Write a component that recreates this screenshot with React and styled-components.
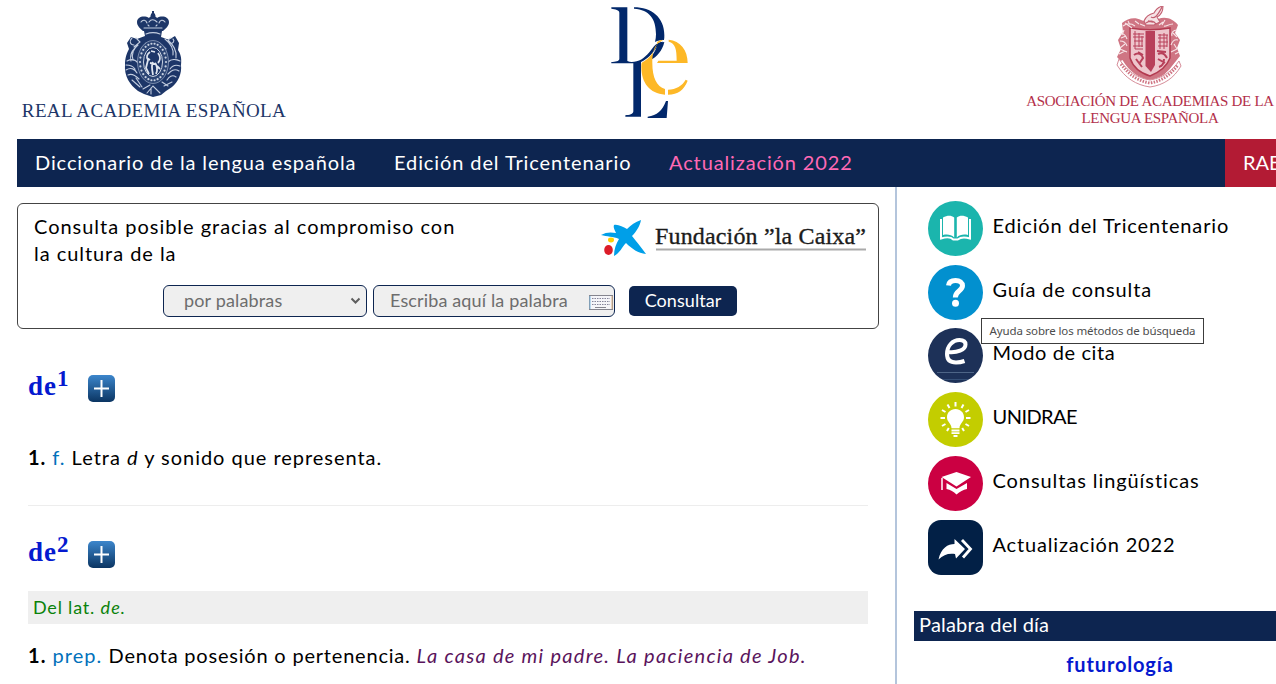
import React from "react";
import styled, { createGlobalStyle } from "styled-components";

const navy = "#0d2550";

const Global = createGlobalStyle`
  *{box-sizing:border-box}
  html,body{margin:0;padding:0;background:#fff;overflow:hidden}
  body{font-family:Lato,"Noto Sans",sans-serif;font-size:20px;color:#000;width:1276px;height:684px}
`;

const Page = styled.div`width:1276px;height:684px;overflow:hidden;background:#fff;display:flex;flex-direction:column;`;
const T = styled.span`
  letter-spacing:${p => p.$s ?? 1}px;
  white-space:pre;
  color:${p => p.$c || "inherit"};
  font-style:${p => (p.$i ? "italic" : "normal")};
  font-weight:${p => (p.$b ? 700 : 400)};
`;

const Header = styled.header`height:139px;flex:none;display:flex;justify-content:space-between;`;
const Brand = styled.div`
  width:${p => p.$w}px;
  margin-left:${p => p.$ml || 0}px;
  margin-right:${p => p.$mr || 0}px;
  padding-top:${p => p.$pt}px;
  display:flex;flex-direction:column;align-items:center;
  font-family:"Liberation Serif",serif;
  color:${p => p.$c};
  white-space:nowrap;
`;
const BrandLine = styled.div`
  font-size:${p => p.$fs}px;
  line-height:${p => p.$lh}px;
  letter-spacing:${p => p.$s}px;
  margin-top:${p => p.$mt || 0}px;
`;

const Nav = styled.nav`
  height:48px;flex:none;margin-left:17px;background:${navy};color:#fff;
  display:flex;line-height:46px;padding-left:18px;
`;
const NavItem = styled.a`width:${p => p.$w}px;flex:none;color:${p => p.$c || "#fff"};`;
const RaeTab = styled.a`margin-left:auto;width:51px;background:#b31b34;padding-left:18px;overflow:hidden;white-space:nowrap;`;

const Body = styled.div`flex:1;display:flex;min-height:0;`;
const Main = styled.main`width:895px;flex:none;padding:16px 16px 0 17px;`;
const SearchBox = styled.section`
  height:126px;border:1px solid #444;border-radius:6px;padding:9px 0 0 16px;
  display:flex;flex-direction:column;
`;
const Sponsor = styled.div`display:flex;justify-content:space-between;height:72px;padding-right:11px;`;
const SponsorText = styled.p`margin:0;line-height:27px;`;
const Form = styled.div`display:flex;height:32px;padding-left:129px;font-size:18px;color:#6d6d6d;align-items:center;`;
const Field = styled.div`
  width:${p => p.$w}px;height:32px;margin-right:${p => p.$mr}px;
  padding:0 ${p => p.$pr}px 3px ${p => p.$pl}px;
  border:1px solid ${navy};border-radius:6px;background:#efefef;
  display:flex;align-items:center;justify-content:space-between;
  svg{margin-top:${p => p.$drop}px}
`;
const Submit = styled.button`
  width:108px;height:30px;border:0;border-radius:5px;background:${navy};color:#fff;
  font:18px Lato,sans-serif;padding:0 0 3px;
`;

const Entry = styled.article`padding:0 11px;`;
const Title = styled.h2`
  margin:${p => p.$mt}px 0 0;height:40px;display:flex;align-items:center;
  font:700 27px "Liberation Serif",serif;color:#0519cf;
`;
const Head = styled.span`width:60px;line-height:32px;white-space:nowrap;padding-bottom:4px;letter-spacing:1px;`;
const Sup = styled.sup`font-size:23px;line-height:0;vertical-align:9px;`;
const Plus = styled.span`
  width:27px;height:27px;border-radius:5px;
  background:linear-gradient(#3c86cc,#0b3562);
  display:flex;align-items:center;justify-content:center;
`;
const Def = styled.p`margin:${p => p.$mt}px 0 0;line-height:26px;height:26px;white-space:nowrap;`;
const Rule = styled.hr`border:0;height:1px;background:#ededed;margin:35px 0 0;`;
const Etym = styled.div`margin-top:17px;height:33px;line-height:32px;padding-left:5px;background:#efefef;color:#0a820a;font-size:18px;`;

const Side = styled.aside`flex:1;border-left:2px solid #b4c5dc;padding:14px 0 0 17px;min-width:0;`;
const Item = styled.a`
  height:${p => p.$h}px;display:flex;gap:10px;padding-left:14px;position:relative;
  svg{flex:none}
`;
const ItemText = styled.span`line-height:49px;margin-left:-.5px;`;
const Tooltip = styled.span`
  position:absolute;left:67px;top:53px;z-index:2;width:223px;height:26px;
  border:1px solid #3c3c3c;background:#fff;color:#4c4c4c;letter-spacing:-.12px;
  font:11.5px/24px "Noto Sans",sans-serif;text-align:center;white-space:nowrap;
`;
const DayBar = styled.div`margin-top:27px;height:30px;line-height:26px;background:${navy};color:#fff;padding-left:5px;`;
const DayWord = styled.div`width:412px;text-align:center;line-height:47px;color:#0519cf;`;

function RaeCrest() {
  const beads = Array.from({ length: 26 }, (_, i) => {
    const a = (i / 26) * Math.PI * 2;
    return <circle key={i} cx={29 + Math.cos(a) * 13} cy={52 + Math.sin(a) * 18.4} r="1.1" fill="#c9d2e2" />;
  });
  return (
    <svg width="60" height="88" viewBox="0 0 60 88" fill="none">
      <g fill="#1d3668">
        <path d="M28 1h2v4h-2z" /><circle cx="29" cy="5.5" r="2.4" />
        <path d="M13 12c0-5 7-7 12-4 2-3 6-3 8 0 5-3 12-1 12 4 0 4-3 6-6 9H19c-3-3-6-5-6-9z" />
        <path d="M20 21h18l-1 6c4 1 6 3 9 2l5-3 4 7-1 7c2 3 4 7 3 15 1 9-3 17-9 22l-6 4-5 4-8 2-9-3-6-3c-8-6-14-15-13-26 0-8 2-12 4-16l-2-6 4-6 6 2 8-3z" />
      </g>
      <g stroke="#c3cddf" strokeWidth="1.1" strokeLinecap="round">
        <path d="M17 12c2-3 5-2 6 1M25 12c2-3 5-3 8 0M35 13c1-3 4-4 6-1M20 18h18M24 15l1 1M33 15l-1 1M22 24c5-2 9-2 14 0" />
        <path d="M8 28c-3 3-2 7 2 7M12 28l4 4-6 5M47 28c-3 1-4 4-1 5s5-2 3-4M41 29c5 4 9 9 8 16M44 30c5 5 9 10 8 18M14 35c-4 3-7 9-5 15M11 38c-4 4-5 9-4 13" />
        <path d="M3 51c4-2 8-2 11 2M2 55c4 0 7 1 9 4M2 60c5-3 9-1 11 3M4 65c4-2 7 0 11 4M56 51c-4-2-9-2-12 1M56 56c-5-2-8 0-10 3M55 61c-5-3-8 0-11 3M52 67c-4-3-7 0-9 3" />
        <path d="M8 70l8 7M12 68l6 9M19 79l7-4M23 83l6-7 7 7M40 76l8-4M38 72l6 4M27 84v-6M17 39l5-6M35 33l7 6" />
      </g>
      <ellipse cx="29" cy="52" rx="15.500" ry="21.500" fill="#2c4574" stroke="#9caac5" strokeWidth=".7" />
      {beads}
      <ellipse cx="29" cy="52" rx="9.500" ry="14.500" fill="#1d3668" stroke="#ccd5e4" strokeWidth="1" />
      <path d="M26 42c-3 2-4 5-2 8l-2 8 3 6M29 52c-2 3-1 8 0 13M31 53c2 2 3 7 1 11M26 53l5 1M34 43c3 4 2 8 0 10M27 41l4 1M23 48l3 2M33 56l3 3" stroke="#dfe5ef" strokeWidth="1.8" />
    </svg>
  );
}

function DleLogo() {
  return (
    <svg width="120" height="130" viewBox="0 0 360 390">
      <g fill="#02286b">
        <path d="M64 22h48v161c8 4 18 3 28 1 20-5 34-22 48-40 10-13 18-18 31-19-2 5-6 5-11 9-10 8-17 22-29 34-8 8-16 13-26 18v164h-47v-4c12-1 24-3 24-12V190H64v-4c12-1 24-2 24-10V38c0-8-12-11-24-12z" />
        <path d="M132 22c52 0 91 30 91 83 0 6 0 11-1 15-10 0-19 2-27 6 2-8 3-15 3-23 0-46-19-74-66-77z" />
        <path d="M223 126c-6 26-22 45-42 54l3-11c8-7 15-26 20-36 4-5 10-7 19-7z" />
        <path d="M173 354v-4c29-4 43-17 55-47h6l-4 51z" />
      </g>
      <g fill="#fdb827">
        <path d="M220 119c-5 5-13 7-20 15-10 11-13 31-13 56 0 42 13 70 38 77v17c-46-3-71-36-71-83 0-5 0-9 1-13 10-5 20-12 28-22 10-14 18-28 19-41 6-4 12-6 18-6z" />
        <path d="M236 119c35 3 57 31 57 70h-92c2-3 3-5 4-7h55c0-35-4-52-24-57z" />
        <path d="M234 269c25-1 42-11 53-30l6 3c-11 27-29 42-59 42z" />
      </g>
    </svg>
  );
}

function AsaleCrest() {
  return (
    <svg width="70" height="82" viewBox="0 0 70 82" fill="none">
      <g fill="#cf7583">
        <path d="M7 17c6-5 13-6 19-3l8 3 9-4c8-3 15 0 20 6l-3 8 5 7-3 8 3 8-8 10c-6 8-13 14-22 16-10-2-19-8-24-15L2 51l4-8-3-9 5-8z" />
      </g>
      <path d="M29 15c2-5 6-7 10-8 2-4 4-6 9-7 0 6-2 9-6 11l3 5-6 3h-8z" fill="#f6e3e6" stroke="#c25f70" strokeWidth="1.1" />
      <path d="M36 11c3 2 6 0 11-10M33 15l5 1M31 17c4-3 8-2 10 1" stroke="#c25f70" strokeWidth="1.3" />
      <path d="M15 22c12 2 28 2 40 0v30c-3 8-10 14-20 18-10-3-17-9-20-18z" fill="#eec5cc" stroke="#b33a50" strokeWidth="1.5" />
      <path d="M30.500 25h9.500v34l-4 7-5.500-6z" fill="#b8405a" />
      <g stroke="#b8405a" strokeWidth="1">
        <path d="M18 28h11M18 31h11M19 35h9M18 40h10M20 43h8M43 29h10M43 32h9M43 36h10M43 40h9M20 25v18M24 27v14M27 30v11M45 28v15M49 27v16M52 29v12" />
        <path d="M19 49c4-3 8-1 9 3l-4 6M21 53l6 8M43 48c4-2 7 0 9 4M43 53l7 4M44 61c3-1 5-4 5-8M23 46l5 3M42 45l9 1" strokeWidth="2" />
      </g>
      <g stroke="#f7e4e7" strokeWidth="1.1">
        <path d="M8 20c4-3 8-3 12 0M10 17l7 5M5 28c4-1 6 2 7 5M5 35c4 0 6 2 7 5M5 43l7 3M9 24l-2 5M10 38l-5 4M58 18c-5 0-7 3-9 2M62 24c-4 0-6 3-5 6M63 34c-4-1-6 2-7 5M62 43l-6 3M58 27l4 4M59 38l3 5M25 18l5 2M50 14l-3 5M13 15l2 4M6 32l5-2M4 48l6-3M60 48l4-2M44 19l4-3M20 15l4 3" />
      </g>
      <path d="M4 56c7 12 18 20 31 22 13-2 23-9 30-21" stroke="#fff" strokeWidth="8" />
      <path d="M4 53c8 12 18 19 31 21 13-2 22-9 29-19M4 53l-2 6c8 13 19 20 33 22 14-2 24-9 31-21l-2-5" stroke="#d68c98" strokeWidth="1" />
      <path d="M6 58c8 11 17 17 29 19 12-2 20-8 28-18" stroke="#cf7583" strokeWidth="3" strokeDasharray="1.5 1.3" />
    </svg>
  );
}

function CaixaLogo() {
  return (
    <svg width="269" height="45" viewBox="0 0 269 45">
      <path d="M3 22c5-3 10-3 15-2-1-3-3-5-2-8 4-1 9 2 13 4 4-4 8-7 14-9-1 6-5 12-9 16 4 5 9 11 14 18-8-1-14-5-20-11-4 4-6 10-12 13 0-7 2-12 5-17-6-3-12-2-18-4z" fill="#009fe8" />
      <ellipse cx="13" cy="27" rx="3" ry="2.400" fill="#ffd000" />
      <ellipse cx="10.500" cy="37" rx="4.300" ry="5" fill="#dc1c28" />
      <text x="57" y="31" fontFamily="Liberation Serif, serif" fontSize="24" fill="#1b1b1b" stroke="#1b1b1b" strokeWidth=".35" textLength="211">Fundación ”la Caixa”</text>
      <path d="M58 36.500h210" stroke="#aaa" strokeWidth="1.800" />
    </svg>
  );
}

function Keyboard() {
  return (
    <svg width="24" height="15" viewBox="0 0 24 15">
      <rect x=".5" y=".5" width="23" height="14" fill="#f5f5f9" stroke="#85858f" />
      <path d="M3 3.500h18M3 6.500h18M3 9.500h18" stroke="#85859a" strokeDasharray="1.500 1" />
      <path d="M6 12.500h11" stroke="#85858f" /><path d="M1 1v13" stroke="#7cb8df" /><path d="M23 1v13" stroke="#d9b184" />
    </svg>
  );
}

const discs = { book: "#1bb5ad", help: "#0290cf", cite: "#1d3158", bulb: "#c3cd00", cap: "#cb0042" };

function Icon({ kind }) {
  return (
    <svg width="55" height="55" viewBox="0 0 55 55" fill="none">
      {kind === "share" ? <rect width="55" height="55" rx="13" fill="#022046" /> : <circle cx="27.500" cy="27.500" r="27.500" fill={discs[kind]} />}
      {kind === "book" && (
        <g>
          <path d="M15 16.500c4-2 8-2.500 11.200 0v20c-3-3-7-3.500-11.200-2.500zM40 16.500c-4-2-8-2.500-11.200 0v20c3-3 7-3.500 11.200-2.500z" fill="#fff" />
          <path d="M13 18v19.500c5-1.500 10-1.500 12.300 1h4.400c3-2.500 7.500-2.500 12.300-1V18" stroke="#fff" strokeWidth="2" />
        </g>
      )}
      {kind === "help" && (
        <g><path d="M20.500 20.500c.5-3.500 3.200-5 7-5 4.300 0 7 2 7 5.300 0 5-7.200 5-7.200 11.700" stroke="#fff" strokeWidth="5" /><circle cx="27.500" cy="38.300" r="3.500" fill="#fff" /></g>
      )}
      {kind === "cite" && (
        <g>
          <path d="M20 24c9 1 17.500-2 17.500-7.500 0-3-2.500-4.500-6-4.500-7 0-12.500 6-12.500 14 0 6 3.500 8.500 9 8.500 3 0 6-.6 8.500-1.500" stroke="#fff" strokeWidth="4" />
          <path d="M9 44.500h37" stroke="#4e6587" /><path d="M15 51.500h25" stroke="#354f76" />
        </g>
      )}
      {kind === "bulb" && (
        <g>
          <path d="M27.500 17c-5 0-8.500 3.600-8.500 8.300 0 5 4.500 6 4.500 11h8c0-5 4.500-6 4.500-11 0-4.700-3.500-8.300-8.500-8.300z" fill="#fff" />
          <path d="M23.500 38.500h8M23.500 41.200h8M25.500 44h4" stroke="#fff" strokeWidth="1.800" />
          <path d="M27.500 10v4.500M19.500 12.500l2 3.500M35.500 12.500l-2 3.500M14 18l3.500 2M41 18l-3.500 2M12.500 26H17M38 26h4.500M14 34l3.500-2M41 34l-3.500-2M19 39l1.800-3M36 39l-1.800-3" stroke="#fff" strokeWidth="2" />
        </g>
      )}
      {kind === "cap" && (
        <g>
          <path d="M13.500 21L28.500 16l14.500 5-14.500 9.500z" fill="#fff" />
          <path d="M18.500 27l10 6 10.500-6v6c-4 1-7 2.500-10.500 5.500-3-3-6-4.500-10-5.500z" fill="#fff" />
          <path d="M14 22v12" stroke="#fff" strokeWidth="1.500" />
        </g>
      )}
      {kind === "share" && (
        <g>
          <path d="M10.500 39.500C13 28 20 24 26.500 24v-5L37 29l-9 9.500-1-4.500c-7-1-11.500 1-16.500 5.500z" fill="#fff" />
          <path d="M34 20l8.500 9L35 37.500" stroke="#fff" strokeWidth="2.800" />
        </g>
      )}
    </svg>
  );
}

const items = [
  ["book", "Edición del Tricentenario", 64, 0.87],
  ["help", "Guía de consulta", 63, 0.85],
  ["cite", "Modo de cita", 64, 0.6],
  ["bulb", "UNIDRAE", 64, -0.55],
  ["cap", "Consultas lingüísticas", 64, 0.92],
  ["share", "Actualización 2022", 64, 0.83],
];

function AddButton() {
  return (
    <Plus>
      <svg width="17" height="19" viewBox="0 0 17 19"><path d="M8.500 1v17M1 9.500h15" stroke="#fff" strokeWidth="2" /></svg>
    </Plus>
  );
}

export default function App() {
  return (
    <Page>
      <Global />
      <Header>
        <Brand $w={264} $ml={22} $pt={10} $c="#1d3668">
          <RaeCrest />
          <BrandLine $fs={19} $lh={22} $s={0.37} $mt={2}>REAL ACADEMIA ESPAÑOLA</BrandLine>
        </Brand>
        <Brand $w={120} $mr={10} $pt={0}><DleLogo /></Brand>
        <Brand $w={252} $pt={6} $c="#b3304a">
          <AsaleCrest />
          <BrandLine $fs={15} $lh={17} $s={-0.28} $mt={5}>ASOCIACIÓN DE ACADEMIAS DE LA</BrandLine>
          <BrandLine $fs={15} $lh={17} $s={-0.3}>LENGUA ESPAÑOLA</BrandLine>
        </Brand>
      </Header>
      <Nav>
        <NavItem $w={359}><T $s={0.9}>Diccionario de la lengua española</T></NavItem>
        <NavItem $w={275}><T $s={0.9}>Edición del Tricentenario</T></NavItem>
        <NavItem $w={200} $c="#ff69b4"><T $s={0.88}>Actualización 2022</T></NavItem>
        <RaeTab><T $s={0}>RAE</T></RaeTab>
      </Nav>
      <Body>
        <Main>
          <SearchBox>
            <Sponsor>
              <SponsorText>
                <T $s={0.98}>Consulta posible gracias al compromiso con</T><br />
                <T $s={0.95}>la cultura de la</T>
              </SponsorText>
              <CaixaLogo />
            </Sponsor>
            <Form>
              <Field $w={204} $mr={6} $pl={20} $pr={5} $drop={2}>
                <T $s={0.15}>por palabras</T>
                <svg width="11" height="8" viewBox="0 0 11 8"><path d="M1.500 1.500l4 4 4-4" stroke="#5e5e5e" strokeWidth="2" fill="none" /></svg>
              </Field>
              <Field $w={242} $mr={14} $pl={16} $pr={1} $drop={6}>
                <T $s={0.14}>Escriba aquí la palabra</T>
                <Keyboard />
              </Field>
              <Submit><T $s={0.05}>Consultar</T></Submit>
            </Form>
          </SearchBox>
          <Entry>
            <Title $mt={39}><Head>de<Sup>1</Sup></Head><AddButton /></Title>
            <Def $mt={36}>
              <T $b>1. </T><T $c="#0171bb">f. </T><T>Letra </T><T $i>d</T><T $s={0.97}> y sonido que representa.</T>
            </Def>
            <Rule />
            <Title $mt={28}><Head>de<Sup>2</Sup></Head><AddButton /></Title>
            <Etym><T $s={0.8}>Del lat. </T><T $s={1.1} $i>de.</T></Etym>
            <Def $mt={18}>
              <T $b $s={1.1}>1. </T><T $c="#0171bb" $s={1.05}>prep. </T><T $s={0.8}>Denota posesión o pertenencia. </T>
              <T $i $c="#5a145c" $s={1.28}>La casa de mi padre. La paciencia de Job.</T>
            </Def>
          </Entry>
        </Main>
        <Side>
          {items.map(([kind, label, h, s]) => (
            <Item key={kind} $h={h}>
              <Icon kind={kind} />
              <ItemText><T $s={s}>{label}</T></ItemText>
              {kind === "help" && <Tooltip>Ayuda sobre los métodos de búsqueda</Tooltip>}
            </Item>
          ))}
          <DayBar><T $s={0.2}>Palabra del día</T></DayBar>
          <DayWord><T $b $s={0.85}>futurología</T></DayWord>
        </Side>
      </Body>
    </Page>
  );
}
